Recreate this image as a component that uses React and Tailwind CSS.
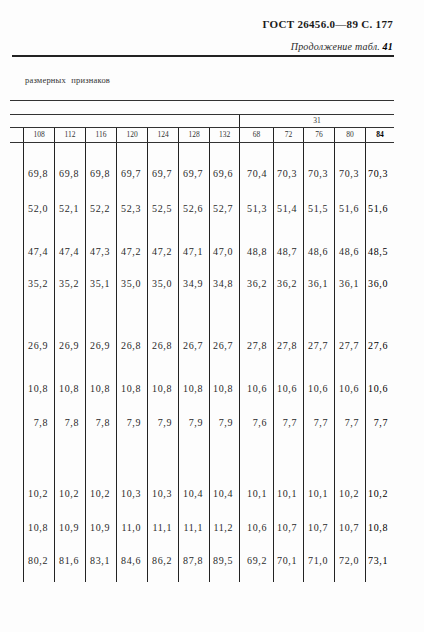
import React from "react";

const COLS = "grid grid-cols-[13px_31px_31px_31px_31px_31px_31px_30px_34px_30px_31px_31px_29px]";

const HEAD = ["108", "112", "116", "120", "124", "128", "132", "68", "72", "76", "80", "84"];

const ROWS = [
  { cls: "h-[41px] pt-[21px]", v: ["69,8", "69,8", "69,8", "69,7", "69,7", "69,7", "69,6", "70,4", "70,3", "70,3", "70,3", "70,3"] },
  { cls: "h-[35px] pt-[15px]", v: ["52,0", "52,1", "52,2", "52,3", "52,5", "52,6", "52,7", "51,3", "51,4", "51,5", "51,6", "51,6"] },
  { cls: "h-[43px] pt-[23px]", v: ["47,4", "47,4", "47,3", "47,2", "47,2", "47,1", "47,0", "48,8", "48,7", "48,6", "48,6", "48,5"] },
  { cls: "h-[32px] pt-[12px]", v: ["35,2", "35,2", "35,1", "35,0", "35,0", "34,9", "34,8", "36,2", "36,2", "36,1", "36,1", "36,0"] },
  { cls: "h-[62px] pt-[42px]", v: ["26,9", "26,9", "26,9", "26,8", "26,8", "26,7", "26,7", "27,8", "27,8", "27,7", "27,7", "27,6"] },
  { cls: "h-[43px] pt-[23px]", v: ["10,8", "10,8", "10,8", "10,8", "10,8", "10,8", "10,8", "10,6", "10,6", "10,6", "10,6", "10,6"] },
  { cls: "h-[34px] pt-[14px]", v: ["7,8", "7,8", "7,8", "7,9", "7,9", "7,9", "7,9", "7,6", "7,7", "7,7", "7,7", "7,7"] },
  { cls: "h-[71px] pt-[51px]", v: ["10,2", "10,2", "10,2", "10,3", "10,3", "10,4", "10,4", "10,1", "10,1", "10,1", "10,2", "10,2"] },
  { cls: "h-[34px] pt-[14px]", v: ["10,8", "10,9", "10,9", "11,0", "11,1", "11,1", "11,2", "10,6", "10,7", "10,7", "10,7", "10,8"] },
  { cls: "h-[44px] pt-[13px]", v: ["80,2", "81,6", "83,1", "84,6", "86,2", "87,8", "89,5", "69,2", "70,1", "71,0", "72,0", "73,1"] },
];

export default function App() {
  return (
    <div className="w-[424px] h-[632px] bg-[#fdfdfd] overflow-hidden [font-family:'Liberation_Serif','Times_New_Roman',serif] text-[#1a1a1a]">
      <div className="flex justify-end pr-[31px] pt-[17px]">
        <span className="text-[11px] font-bold leading-[14px] tracking-[0.3px]">ГОСТ 26456.0—89 С. 177</span>
      </div>
      <div className="flex justify-end pr-[31px] mt-[9px]">
        <span className="italic text-[10px] leading-[14px] tracking-[0.2px] text-[#2a2a2a]">
          Продолжение табл. <span className="font-bold text-[#000]">41</span>
        </span>
      </div>
      <div className="ml-[12px] w-[382px] h-[2px] bg-[#222] mt-[1px]" />
      <div className="ml-[25px] mt-[18px] text-[8.5px] leading-[10px] text-[#333] tracking-[0.2px] [word-spacing:3px]">
        размерных признаков
      </div>
      <div className="ml-[10px] w-[384px] mt-[15px] border-t border-[#333]" />
      <div className="ml-[10px] w-[384px] mt-[13px] border-t border-[#333]" />
      <div className="ml-[10px] w-[384px] flex h-[12px]">
        <div className="w-[229px]" />
        <div className="flex-1 border-l border-[#222] flex items-center justify-center text-[7.5px] leading-[12px] text-[#333]">31</div>
      </div>
      <div className="ml-[10px] w-[384px] border-t border-[#333]" />
      <div className={`${COLS} ml-[10px] w-[384px] h-[14px]`}>
        <div />
        {HEAD.map((h, i) => (
          <div
            key={i}
            className={`border-l border-[#222] flex items-center justify-center text-[7.5px] leading-[14px] ${i === 11 ? "font-bold text-[#000]" : "text-[#333]"}`}
          >
            {h}
          </div>
        ))}
      </div>
      <div className="ml-[10px] w-[384px] border-t border-[#333]" />
      <div className="ml-[10px] w-[384px]">
        {ROWS.map((r, ri) => (
          <div key={ri} className={COLS}>
            <div />
            {r.v.map((v, ci) => (
              <div
                key={ci}
                className={`border-l border-[#222] ${r.cls} text-right pr-[6px] text-[10px] leading-[20px] tracking-[0.6px] ${ci === 11 ? "text-[#000] pr-[4px]" : "text-[#2a2a2a]"}`}
              >
                {v}
              </div>
            ))}
          </div>
        ))}
      </div>
    </div>
  );
}
